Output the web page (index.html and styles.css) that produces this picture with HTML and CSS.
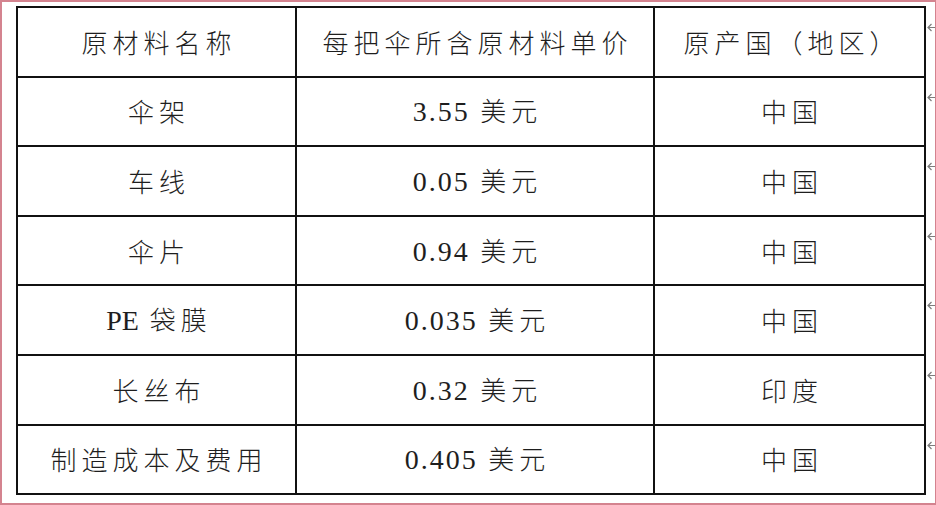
FILE: index.html
```html
<!DOCTYPE html>
<html lang="zh">
<head>
<meta charset="utf-8">
<link rel="stylesheet" href="styles.css">
</head>
<body>
<div class="frame">
  <table class="grid">
    <colgroup><col class="c1"><col class="c2"><col class="c3"></colgroup>
    <tr><td>原材料名称</td><td>每把伞所含原材料单价</td><td>原产国（地区）</td></tr>
    <tr><td>伞架</td><td><span class="num">3.55</span> 美元</td><td>中国</td></tr>
    <tr><td>车线</td><td><span class="num">0.05</span> 美元</td><td>中国</td></tr>
    <tr><td>伞片</td><td><span class="num">0.94</span> 美元</td><td>中国</td></tr>
    <tr><td><span class="lat">PE</span> 袋膜</td><td><span class="num">0.035</span> 美元</td><td>中国</td></tr>
    <tr><td>长丝布</td><td><span class="num">0.32</span> 美元</td><td>印度</td></tr>
    <tr><td>制造成本及费用</td><td><span class="num">0.405</span> 美元</td><td>中国</td></tr>
  </table>
  <div class="marks">
    <div class="mark"><svg viewBox="0 0 8 9" width="8" height="9"><path d="M4.5 1 L1 4.5 L4.5 8 M1 4.5 H8" fill="none" stroke="#7d7d7d" stroke-width="1.2"/></svg></div>
    <div class="mark"><svg viewBox="0 0 8 9" width="8" height="9"><path d="M4.5 1 L1 4.5 L4.5 8 M1 4.5 H8" fill="none" stroke="#7d7d7d" stroke-width="1.2"/></svg></div>
    <div class="mark"><svg viewBox="0 0 8 9" width="8" height="9"><path d="M4.5 1 L1 4.5 L4.5 8 M1 4.5 H8" fill="none" stroke="#7d7d7d" stroke-width="1.2"/></svg></div>
    <div class="mark"><svg viewBox="0 0 8 9" width="8" height="9"><path d="M4.5 1 L1 4.5 L4.5 8 M1 4.5 H8" fill="none" stroke="#7d7d7d" stroke-width="1.2"/></svg></div>
    <div class="mark"><svg viewBox="0 0 8 9" width="8" height="9"><path d="M4.5 1 L1 4.5 L4.5 8 M1 4.5 H8" fill="none" stroke="#7d7d7d" stroke-width="1.2"/></svg></div>
    <div class="mark"><svg viewBox="0 0 8 9" width="8" height="9"><path d="M4.5 1 L1 4.5 L4.5 8 M1 4.5 H8" fill="none" stroke="#7d7d7d" stroke-width="1.2"/></svg></div>
    <div class="mark"><svg viewBox="0 0 8 9" width="8" height="9"><path d="M4.5 1 L1 4.5 L4.5 8 M1 4.5 H8" fill="none" stroke="#7d7d7d" stroke-width="1.2"/></svg></div>
  </div>
</div>
</body>
</html>
```

FILE: styles.css
```css
html, body {
  margin: 0;
  padding: 0;
  background: #ffffff;
}
.frame {
  box-sizing: border-box;
  width: 936px;
  height: 505px;
  border: 2px solid #d4838f;
  border-right-width: 1px;
  padding: 4px 0 0 14px;
  display: flex;
  align-items: flex-start;
  background: #ffffff;
}
.grid {
  border-collapse: collapse;
  width: 911px;
  table-layout: fixed;
  font-family: "Noto Sans CJK SC", "Noto Sans", sans-serif;
  font-weight: 300;
  font-size: 26px;
  color: #1e1e1e;
}
.c1 { width: 279px; }
.c2 { width: 358px; }
.grid tr { height: 69.6px; }
.grid td {
  border: 2px solid #111111;
  padding: 0 0 0 5px;
  text-align: center;
  vertical-align: middle;
  letter-spacing: 5px;
  line-height: 30px;
}
.num {
  font-family: "Liberation Serif", serif;
  font-size: 28px;
  letter-spacing: 2px;
}
.lat {
  font-family: "Liberation Serif", serif;
  font-size: 28px;
  letter-spacing: 0;
}
.marks {
  display: flex;
  flex-direction: column;
  padding-left: 1px;
}
.mark {
  height: 69.6px;
  box-sizing: border-box;
  padding-top: 17px;
}
.mark svg { display: block; }
```
